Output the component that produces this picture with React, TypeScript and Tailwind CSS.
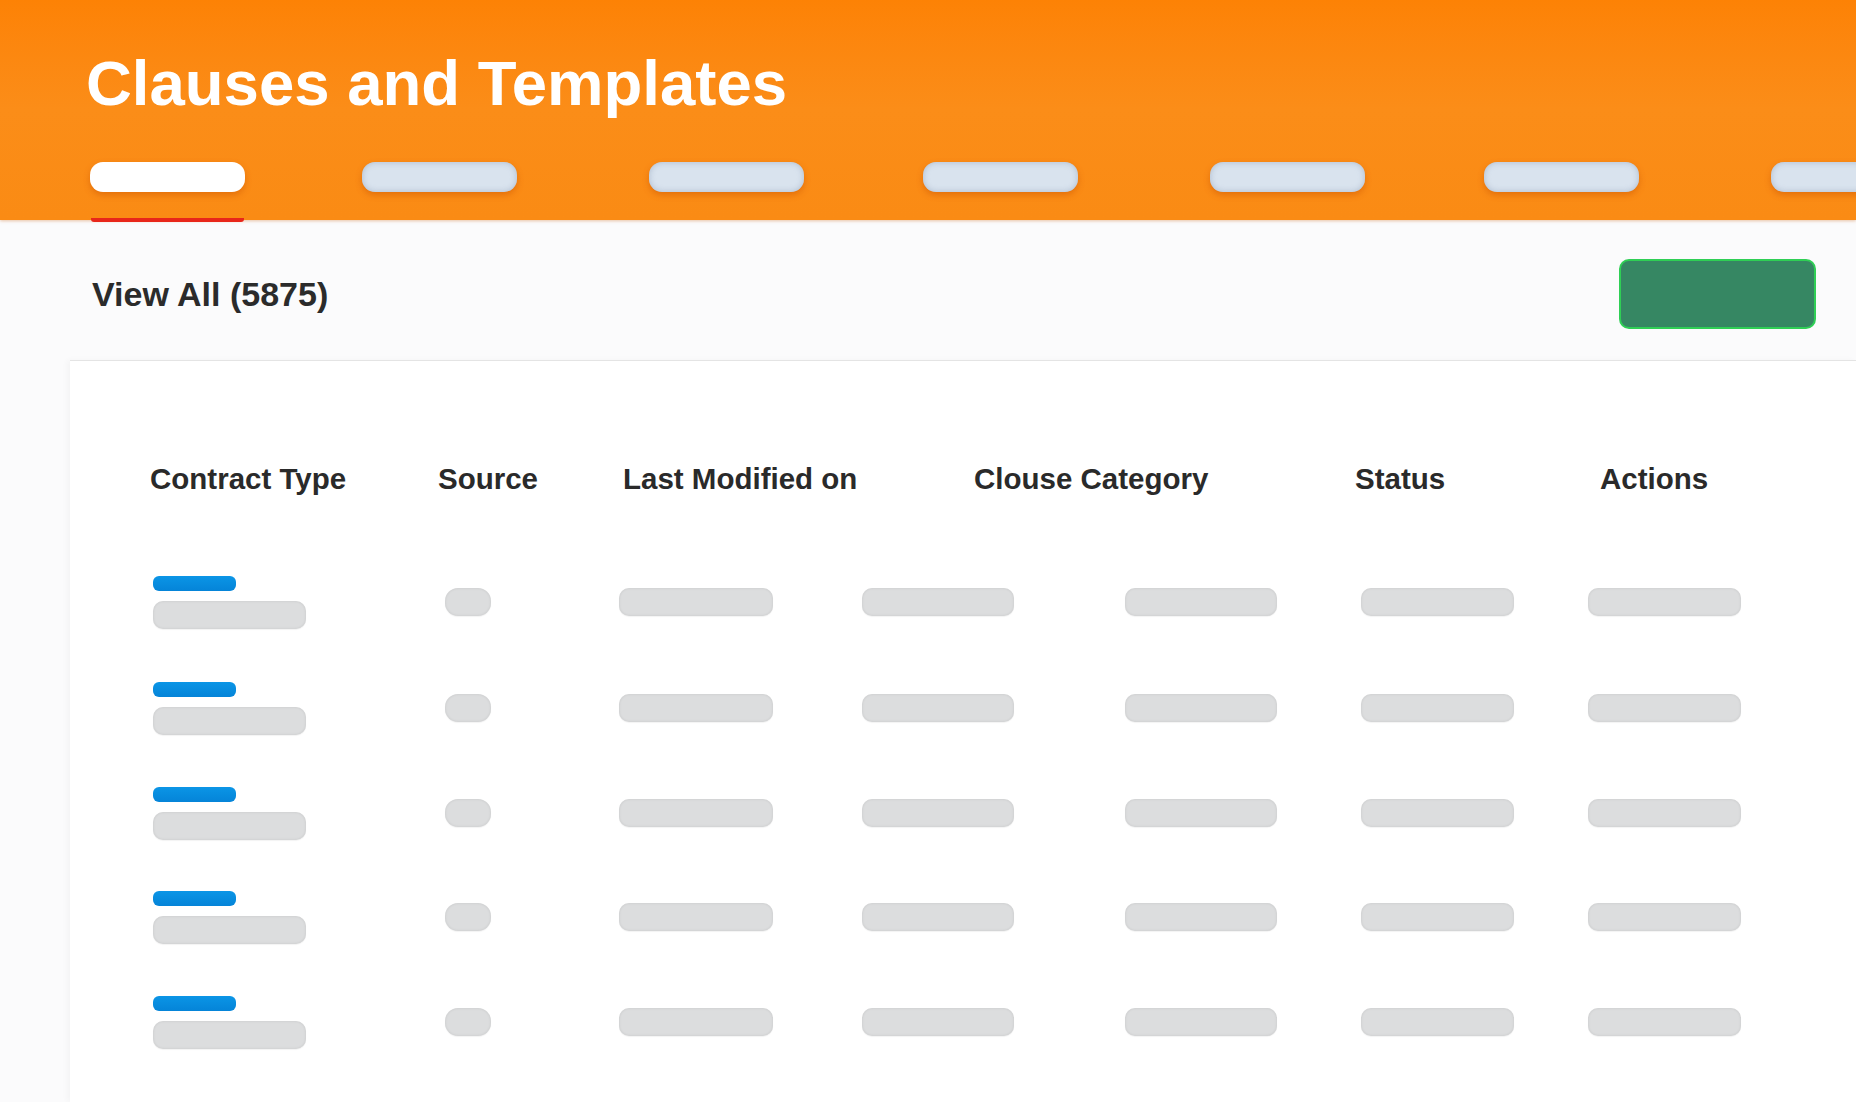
import React from 'react'

const tabs = [
  { active: true, gap: '' },
  { active: false, gap: 'ml-[117px]' },
  { active: false, gap: 'ml-[132px]' },
  { active: false, gap: 'ml-[119px]' },
  { active: false, gap: 'ml-[132px]' },
  { active: false, gap: 'ml-[119px]' },
  { active: false, gap: 'ml-[132px]' },
]

const headers = [
  { label: 'Contract Type', width: 'w-[288px]' },
  { label: 'Source', width: 'w-[185px]' },
  { label: 'Last Modified on', width: 'w-[351px]' },
  { label: 'Clouse Category', width: 'w-[381px]' },
  { label: 'Status', width: 'w-[245px]' },
  { label: 'Actions', width: 'w-[200px]' },
]

const rowHeights = ['h-[106px]', 'h-[106px]', 'h-[104px]', 'h-[104px]', 'h-[106px]']

function Bar({ className = 'w-[154px] rounded-[10px]' }: { className?: string }) {
  return (
    <div
      className={`h-[28px] bg-[#dcddde] shadow-[inset_0_0_3px_rgba(0,0,0,0.10),0_1px_1px_rgba(0,0,0,0.05)] ${className}`}
    />
  )
}

function SkeletonRow({ height }: { height: string }) {
  return (
    <div className={`flex items-center pl-[83px] ${height}`}>
      {/* contract type: blue label + name */}
      <div className="w-[292px] flex flex-col gap-[10px]">
        <div className="w-[83px] h-[15px] rounded-[6px] bg-gradient-to-b from-[#0b95e6] to-[#0584d8]" />
        <Bar className="w-[153px] rounded-[10px]" />
      </div>
      <div className="w-[174px]">
        <Bar className="w-[46px] rounded-[13px]" />
      </div>
      <div className="w-[243px]">
        <Bar />
      </div>
      <div className="w-[263px]">
        <Bar className="w-[152px] rounded-[10px]" />
      </div>
      <div className="w-[236px]">
        <Bar className="w-[152px] rounded-[10px]" />
      </div>
      <div className="w-[227px]">
        <Bar className="w-[153px] rounded-[10px]" />
      </div>
      <div>
        <Bar className="w-[153px] rounded-[10px]" />
      </div>
    </div>
  )
}

export default function App() {
  return (
    <div
      className="w-[1856px] h-[1102px] overflow-hidden bg-[#fbfbfc] flex flex-col"
      style={{ fontFamily: '"Liberation Sans", Arial, sans-serif' }}
    >
      {/* orange header */}
      <header className="relative z-10 h-[220px] shrink-0 bg-gradient-to-b from-[#fd8205] via-[#fb8d18] to-[#fa8b14] shadow-[0_1px_3px_rgba(200,90,0,0.35)] pl-[86px] pt-[52px]">
        <h1 className="text-[63.5px] leading-none font-bold text-white">Clauses and Templates</h1>
        <div className="flex items-start mt-[46px] pl-[4px]">
          {tabs.map((tab, i) => (
            <div key={i} className={`flex flex-col shrink-0 ${tab.gap}`}>
              <div
                className={
                  tab.active
                    ? 'w-[155px] h-[30px] rounded-[13px] bg-white shadow-[0_3px_6px_rgba(200,80,0,0.45)]'
                    : 'w-[155px] h-[30px] rounded-[13px] bg-[#d9e3ee] shadow-[0_3px_6px_rgba(200,80,0,0.45),inset_0_0_6px_rgba(110,130,160,0.4)]'
                }
              />
              {tab.active && <div className="mt-[26px] h-[4px] mx-[1px] rounded-b-[3px] bg-[#e8261a]" />}
            </div>
          ))}
        </div>
      </header>

      {/* title row */}
      <div className="h-[140px] shrink-0 flex items-center justify-between pt-[8px] pl-[92px] pr-[40px]">
        <h2 className="text-[34px] font-bold text-[#2b2b2b] leading-none">View All (5875)</h2>
        <button className="w-[197px] h-[70px] rounded-[10px] bg-[#368763] border-2 border-[#2fcf55]" />
      </div>

      {/* table card */}
      <div className="ml-[70px] flex-1 bg-white border-t border-[#e4e4e4] shadow-[-3px_0_6px_rgba(0,0,0,0.03)]">
        <div className="flex items-center h-[60px] mt-[88px] pl-[80px]">
          {headers.map((h) => (
            <div key={h.label} className={`${h.width} shrink-0 text-[29.5px] font-bold text-[#2a2a2a] leading-none`}>
              {h.label}
            </div>
          ))}
        </div>
        <div className="mt-[40px]">
          {rowHeights.map((h, i) => (
            <SkeletonRow key={i} height={h} />
          ))}
        </div>
      </div>
    </div>
  )
}
